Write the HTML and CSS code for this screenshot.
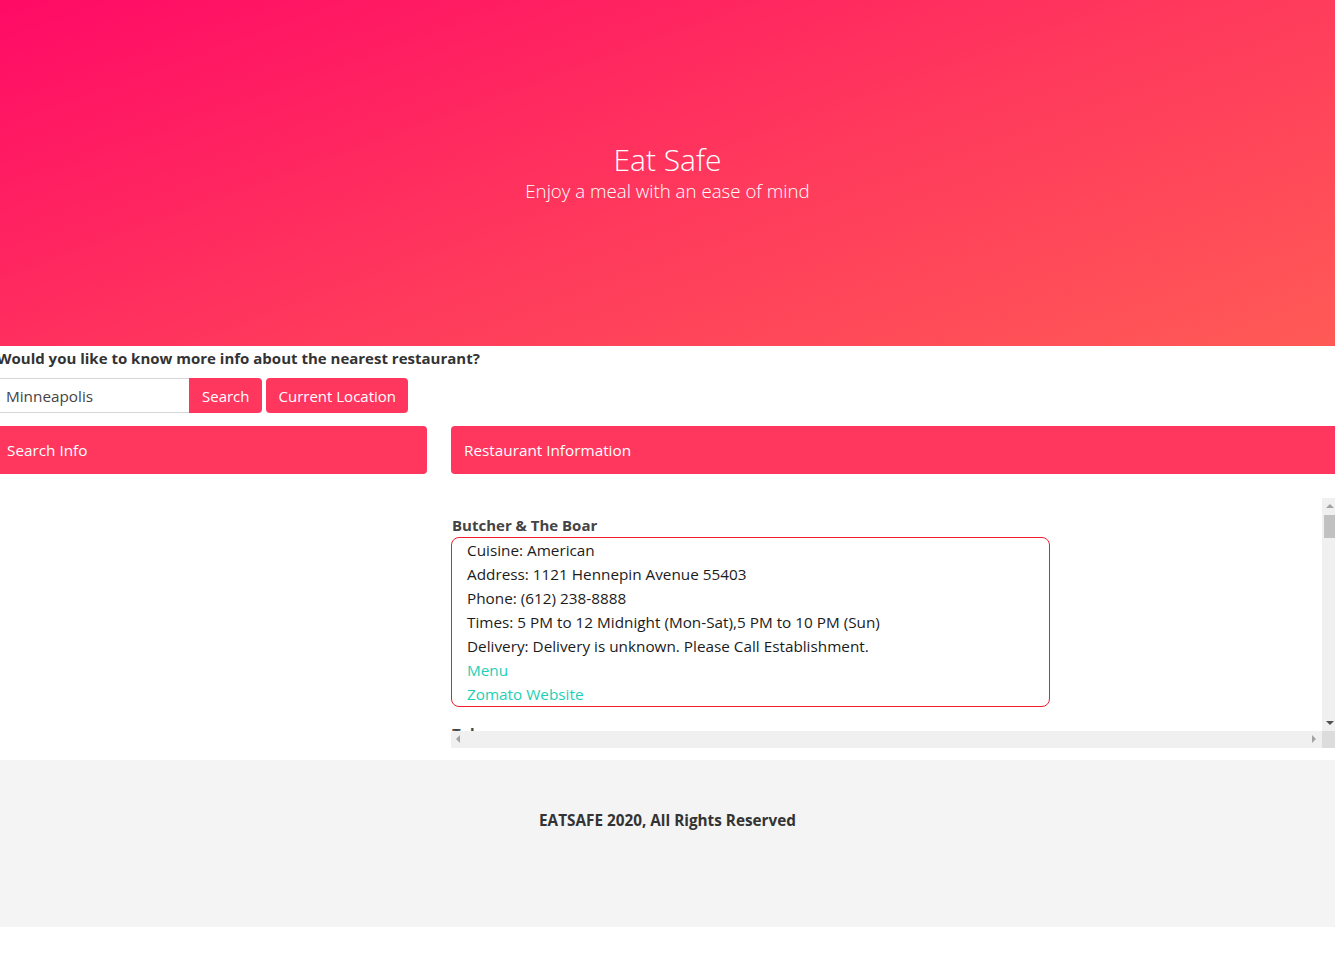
FILE: index.html
```html
<!DOCTYPE html>
<html lang="en">
<head>
<meta charset="utf-8">
<title>Eat Safe</title>
<link rel="stylesheet" href="styles.css">
</head>
<body>
<header class="hero">
  <h1 class="hero-title">Eat Safe</h1>
  <p class="hero-sub">Enjoy a meal with an ease of mind</p>
</header>

<section class="search">
  <p class="question">Would you like to know more info about the nearest restaurant?</p>
  <div class="search-row">
    <div class="input-group">
      <input class="city-input" type="text" value="Minneapolis">
      <button class="btn btn-attached">Search</button>
    </div>
    <button class="btn">Current Location</button>
  </div>
</section>

<main class="panels">
  <div class="col-left">
    <div class="card-header">Search Info</div>
  </div>
  <div class="col-right">
    <div class="card-header">Restaurant Information</div>
    <div class="results">
      <div class="results-inner">
        <div class="item">
          <h4 class="item-title">Butcher &amp; The Boar</h4>
          <div class="item-box">
            <div>Cuisine: American</div>
            <div>Address: 1121 Hennepin Avenue 55403</div>
            <div>Phone: (612) 238-8888</div>
            <div>Times: 5 PM to 12 Midnight (Mon-Sat),5 PM to 10 PM (Sun)</div>
            <div>Delivery: Delivery is unknown. Please Call Establishment.</div>
            <div><a class="link" href="#">Menu</a></div>
            <div><a class="link" href="#">Zomato Website</a></div>
          </div>
        </div>
        <div class="item">
          <h4 class="item-title">Tobacco</h4>
        </div>
      </div>
      <div class="vbar">
        <span class="arrow arrow-up"></span>
        <span class="vthumb"></span>
        <span class="arrow arrow-down"></span>
      </div>
      <div class="hbar">
        <span class="arrow arrow-left"></span>
        <span class="arrow arrow-right"></span>
      </div>
      <div class="corner"></div>
    </div>
  </div>
</main>

<footer class="footer">
  <p class="footer-text">EATSAFE 2020, All Rights Reserved</p>
</footer>
</body>
</html>
```

FILE: styles.css
```css
html, body {
  margin: 0;
  padding: 0;
}
body {
  font-family: "Open Sans", "Noto Sans", sans-serif;
  font-size: 16px;
  line-height: 1.5;
  color: #212529;
  background: #fff;
  overflow-x: hidden;
}

.hero {
  height: 346px;
  background: linear-gradient(160deg, #ff0a66 0%, #ff3a5c 55%, #ff5a56 100%);
  color: #fff;
  display: flex;
  flex-direction: column;
  align-items: center;
  justify-content: center;
  text-align: center;
  box-sizing: border-box;
  padding-top: 2px;
}
.hero-title {
  margin: 0;
  font-weight: 300;
  font-size: 30px;
  line-height: 34px;
}
.hero-sub {
  margin: 0;
  font-weight: 300;
  font-size: 18.7px;
  line-height: 28px;
}

.search {
  padding-bottom: 13px;
}
.question {
  margin: 0 0 8px -3px;
  font-weight: 700;
  font-size: 15px;
  line-height: 24px;
  color: #333;
}
.search-row {
  display: flex;
  gap: 4px;
  align-items: stretch;
  height: 35px;
}
.input-group {
  display: flex;
  margin-left: -1px;
}
.city-input {
  width: 190px;
  box-sizing: border-box;
  border: 1px solid #d6d6d6;
  border-right: none;
  padding: 0 6px;
  font-family: inherit;
  font-size: 15.3px;
  color: #444;
  outline: none;
  border-radius: 0;
}
.btn {
  background: #ff365e;
  color: #fff;
  border: none;
  font-family: inherit;
  font-size: 15px;
  padding: 0 12px 0 13px;
  border-radius: 4px;
  cursor: pointer;
}
.btn-attached {
  border-radius: 0 4px 4px 0;
}

.panels {
  display: flex;
  gap: 24px;
  margin-left: -6px;
  width: 1345px;
}
.col-left {
  width: 433px;
  flex: none;
}
.col-right {
  flex: 1;
  min-width: 0;
}
.card-header {
  height: 48px;
  box-sizing: border-box;
  background: #ff375e;
  color: #fff;
  border-radius: 4px;
  padding: 0 13px;
  display: flex;
  align-items: center;
  font-size: 15.3px;
}

.results {
  position: relative;
  margin-top: 24px;
  height: 250px;
  overflow: hidden;
}
.results-inner {
  padding-top: 15px;
}
.item {
  margin-bottom: 14px;
}
.item-title {
  margin: 0 0 0 1px;
  font-size: 15px;
  font-weight: 700;
  line-height: 24px;
  color: #444;
}
.item-box {
  width: 599px;
  box-sizing: border-box;
  border: 1px solid #f01c2c;
  border-radius: 8px;
  padding: 0 15px;
  font-size: 15.3px;
  line-height: 24px;
  color: #1b1b1b;
}
.link {
  color: #1ecfb5;
  text-decoration: none;
}

/* scrollbar visuals lying over the scroll area */
.vbar {
  position: absolute;
  top: 0;
  right: 0;
  width: 17px;
  bottom: 17px;
  background: #f0f0f0;
}
.vthumb {
  position: absolute;
  top: 17px;
  left: 2px;
  width: 13px;
  height: 23px;
  background: #c1c1c1;
}
.hbar {
  position: absolute;
  left: 0;
  right: 17px;
  bottom: 0;
  height: 17px;
  background: #f0f0f0;
}
.corner {
  position: absolute;
  right: 0;
  bottom: 0;
  width: 17px;
  height: 17px;
  background: #dcdcdc;
}
.arrow {
  position: absolute;
  width: 0;
  height: 0;
}
.arrow-up {
  top: 6px;
  left: 4px;
  border-left: 4px solid transparent;
  border-right: 4px solid transparent;
  border-bottom: 4px solid #a3a3a3;
}
.arrow-down {
  bottom: 6px;
  left: 4px;
  border-left: 4px solid transparent;
  border-right: 4px solid transparent;
  border-top: 4px solid #505050;
}
.arrow-left {
  left: 5px;
  top: 4px;
  border-top: 4px solid transparent;
  border-bottom: 4px solid transparent;
  border-right: 4px solid #a3a3a3;
}
.arrow-right {
  right: 6px;
  top: 4px;
  border-top: 4px solid transparent;
  border-bottom: 4px solid transparent;
  border-left: 4px solid #a3a3a3;
}

.footer {
  margin-top: 12px;
  height: 167px;
  background: #f4f4f4;
  padding-top: 48px;
  box-sizing: border-box;
  text-align: center;
}
.footer-text {
  margin: 0;
  font-weight: 700;
  font-size: 15.3px;
  line-height: 24px;
  color: #333;
}
```
